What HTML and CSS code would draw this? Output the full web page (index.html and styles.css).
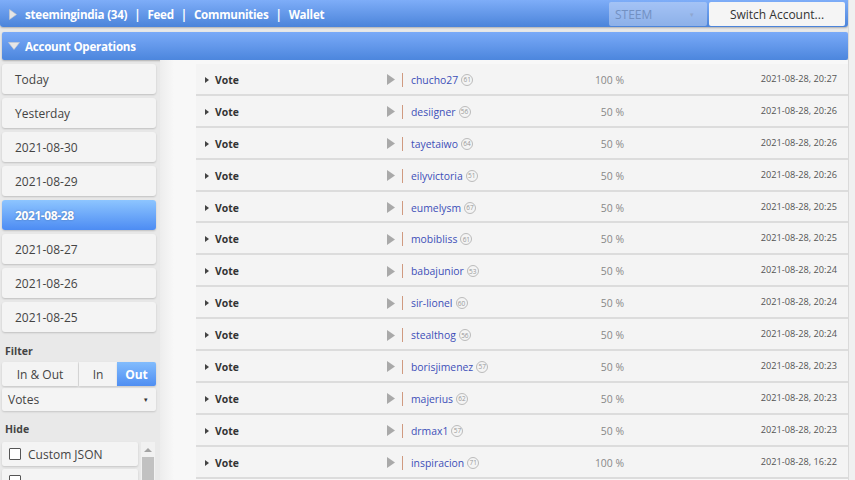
FILE: index.html
```html
<!DOCTYPE html>
<html>
<head>
<meta charset="utf-8">
<link rel="stylesheet" href="styles.css">
</head>
<body>
<div class="page">
  <header class="topbar">
    <nav class="nav">
      <svg class="tri-right" width="8" height="11" viewBox="0 0 8 11"><path d="M0.5 0.5 L7.5 5.5 L0.5 10.5 Z" fill="#e6e6e6" stroke="#c8c8c8" stroke-width="0.6"/></svg>
      <span>steemingindia (34)</span><span class="sep">|</span><span>Feed</span><span class="sep">|</span><span>Communities</span><span class="sep">|</span><span>Wallet</span>
    </nav>
    <div class="tools">
      <div class="coin">STEEM<span class="caret">▾</span></div>
      <div class="switch">Switch Account...</div>
    </div>
  </header>
  <div class="section-head">
    <svg class="tri-down" width="12" height="8" viewBox="0 0 12 8"><path d="M0.5 0.5 L11.5 0.5 L6 7.5 Z" fill="#e6e6e6" stroke="#cfcfcf" stroke-width="0.6"/></svg>
    <span>Account Operations</span>
  </div>
  <div class="content">
    <aside class="sidebar">
      <div class="day">Today</div>
      <div class="day">Yesterday</div>
      <div class="day">2021-08-30</div>
      <div class="day">2021-08-29</div>
      <div class="day active">2021-08-28</div>
      <div class="day">2021-08-27</div>
      <div class="day">2021-08-26</div>
      <div class="day">2021-08-25</div>
      <div class="label filter-label">Filter</div>
      <div class="seg">
        <div class="seg-item w1">In &amp; Out</div>
        <div class="seg-item w2">In</div>
        <div class="seg-item w3 on">Out</div>
      </div>
      <div class="select">Votes<span class="caret-s">▾</span></div>
      <div class="label hide-label">Hide</div>
      <div class="hide-wrap">
        <div class="hide-list">
          <div class="check"><span class="box"></span>Custom JSON</div>
          <div class="check"><span class="box"></span></div>
        </div>
        <div class="vscroll"><span class="up"></span><span class="thumb"></span></div>
      </div>
    </aside>
    <main class="main">
      <div class="rows" id="rows"></div>
    </main>
  </div>
</div>
<div class="right-strip"></div>
<script src="app.js"></script>
</body>
</html>
```
FILE: app.js
```js
const data = [
  ["chucho27","61","100 %","20:27"],
  ["desiigner","56","50 %","20:26"],
  ["tayetaiwo","64","50 %","20:26"],
  ["eilyvictoria","51","50 %","20:26"],
  ["eumelysm","67","50 %","20:25"],
  ["mobibliss","61","50 %","20:25"],
  ["babajunior","53","50 %","20:24"],
  ["sir-lionel","60","50 %","20:24"],
  ["stealthog","56","50 %","20:24"],
  ["borisjimenez","57","50 %","20:23"],
  ["majerius","62","50 %","20:23"],
  ["drmax1","57","50 %","20:23"],
  ["inspiracion","71","100 %","16:22"]
];
const rows = document.getElementById('rows');
rows.innerHTML = data.map(d => `
<div class="row">
  <span class="arr"><svg width="4" height="6" viewBox="0 0 4 6"><path d="M0 0 L4 3 L0 6 Z" fill="#444"/></svg></span>
  <span class="type">Vote</span>
  <span class="play"><svg width="8" height="11" viewBox="0 0 8 11"><path d="M0 0 L8 5.5 L0 11 Z" fill="#a9a9a9"/></svg></span>
  <span class="bar"></span>
  <span class="user">${d[0]}<span class="rep">${d[1]}</span></span>
  <span class="pct">${d[2]}</span>
  <span class="date">2021-08-28, ${d[3]}</span>
</div>`).join('');
```
FILE: styles.css
```css
* { box-sizing: border-box; }
html, body { margin: 0; padding: 0; }
body {
  background: #e9e9e9;
  font-family: "Open Sans", "Liberation Sans", sans-serif;
  width: 855px;
  height: 480px;
  overflow: hidden;
  position: relative;
}
.page { width: 848px; }
.right-strip {
  position: absolute;
  top: 0; right: 0;
  width: 7px; height: 480px;
  background: #f0f0f0;
  border-left: 1px solid #dadada;
}
.topbar {
  height: 27px;
  display: flex;
  justify-content: space-between;
  align-items: center;
  background: linear-gradient(#7eadf8, #4b84da);
  border-radius: 0 0 3px 3px;
  box-shadow: 0 1px 2px rgba(0,0,0,0.25);
  padding: 0 3px 0 9px;
}
.nav {
  display: flex;
  align-items: center;
  color: #fff;
  font-weight: 700;
  font-size: 11.6px;
  letter-spacing: -0.25px;
  padding-top: 2px;
}
.tri-right { margin-right: 8px; margin-top: -1px; }
.sep { margin: 0 7px; }
.tools { display: flex; gap: 2px; align-items: center; }
.coin {
  width: 98px; height: 24px;
  background: rgba(205,220,245,0.5);
  border-radius: 2px;
  color: #7290c2;
  font-size: 12px;
  line-height: 25px;
  padding: 0 6px;
  display: flex; justify-content: space-between;
}
.caret { font-size: 7px; color: #8fa6cf; margin-right: 7px; }
.switch {
  width: 136px; height: 24px;
  background: #f5f5f5;
  border-radius: 2px;
  color: #333;
  font-size: 12px;
  line-height: 25px;
  text-align: center;
}
.section-head {
  margin: 5px 0 0 2px;
  height: 28px;
  display: flex;
  align-items: center;
  padding-left: 6px;
  background: linear-gradient(#7aaaf8, #4c86dd);
  border-radius: 2px;
  color: #fff;
  font-weight: 700;
  font-size: 11.6px;
  letter-spacing: -0.25px;
  box-shadow: 0 1px 2px rgba(0,0,0,0.25);
}
.tri-down { margin-right: 5px; }
.content { display: flex; }
.sidebar {
  width: 156px;
  padding: 4px 0 0 2px;
  flex: none;
}
.day {
  height: 30px;
  margin-bottom: 4px;
  background: #f4f4f4;
  border-radius: 3px;
  box-shadow: 0 1px 2px rgba(0,0,0,0.18);
  font-size: 12px;
  color: #444;
  line-height: 32px;
  padding-left: 13px;
}
.day.active {
  background: linear-gradient(#8dc5ff, #4d8cf3);
  color: #fff;
  font-weight: 700;
  text-shadow: 0 0 2px rgba(0,0,0,0.3);
  letter-spacing: -0.4px;
}
.label {
  font-size: 10.5px;
  font-weight: 700;
  color: #444;
  padding-left: 3px;
}
.filter-label { margin-top: 12px; height: 15px; line-height: 15px; }
.seg {
  display: flex;
  height: 24px;
  margin-top: 3px;
}
.seg-item {
  background: #f4f4f4;
  font-size: 12px;
  color: #444;
  line-height: 26px;
  text-align: center;
  box-shadow: 0 1px 2px rgba(0,0,0,0.15);
}
.w1 { width: 76px; border-radius: 2px 0 0 2px; }
.w2 { width: 38px; margin-left: 1px; }
.w3 { width: 39px; border-radius: 0 2px 2px 0; }
.seg-item.on {
  background: linear-gradient(#82bcfd, #4f8ef2);
  color: #fff;
  font-weight: 700;
}
.select {
  height: 23px;
  margin-top: 2px;
  background: #f4f4f4;
  border-radius: 2px;
  box-shadow: 0 1px 2px rgba(0,0,0,0.15);
  font-size: 12px;
  color: #444;
  line-height: 23px;
  padding: 0 8px 0 6px;
  display: flex; justify-content: space-between;
}
.caret-s { font-size: 7px; color: #333; }
.hide-label { margin-top: 10px; height: 16px; line-height: 16px; }
.hide-wrap {
  display: flex;
  gap: 3px;
  margin-top: 5px;
}
.hide-list { width: 136px; }
.check {
  height: 24px;
  margin-bottom: 3px;
  background: #f4f4f4;
  border-radius: 2px;
  box-shadow: 0 1px 2px rgba(0,0,0,0.15);
  display: flex; align-items: center;
  font-size: 12px;
  color: #444;
  padding-left: 7px;
}
.box {
  width: 12px; height: 12px;
  border: 1px solid #555;
  border-radius: 1px;
  background: #fff;
  margin-right: 7px;
}
.vscroll {
  width: 14px;
  height: 40px;
  background: #f1f1f1;
  display: flex; flex-direction: column; align-items: center;
}
.up {
  width: 0; height: 0;
  border-left: 4px solid transparent;
  border-right: 4px solid transparent;
  border-bottom: 4px solid #a3a3a3;
  margin-top: 6px;
}
.thumb {
  width: 12px; height: 30px;
  background: #c1c1c1;
  margin-top: 5px;
}
.main {
  flex: 1;
  margin-left: 4px;
  background: linear-gradient(90deg, #ededed 0, #f8f8f8 14px, #f8f8f8);
  padding: 4px 0 0 36px;
  height: 420px;
}
.row {
  height: 31.9px;
  background: #f4f4f4;
  border-bottom: 2px solid #dcdcdc;
  display: flex;
  align-items: center;
  padding: 2px 0 0 9px;
  font-size: 10.4px;
}
.arr { width: 10px; display: flex; align-items: center; }
.type { width: 172px; font-weight: 700; color: #333; }
.play { width: 15px; display: flex; align-items: center; }
.bar { width: 1px; height: 14px; background: #d09a80; margin-right: 8px; }
.user { width: 149px; color: #3d4fb8; display: flex; align-items: center; }
.rep {
  display: inline-flex; align-items: center; justify-content: center;
  width: 12px; height: 12px;
  border: 1px solid #bbb;
  border-radius: 50%;
  font-size: 6.5px;
  color: #999;
  margin-left: 3px;
}
.pct { width: 64px; text-align: right; color: #888; }
.date { flex: 1; text-align: right; padding-right: 11px; color: #555; font-size: 9.2px; padding-bottom: 3px; }
```
